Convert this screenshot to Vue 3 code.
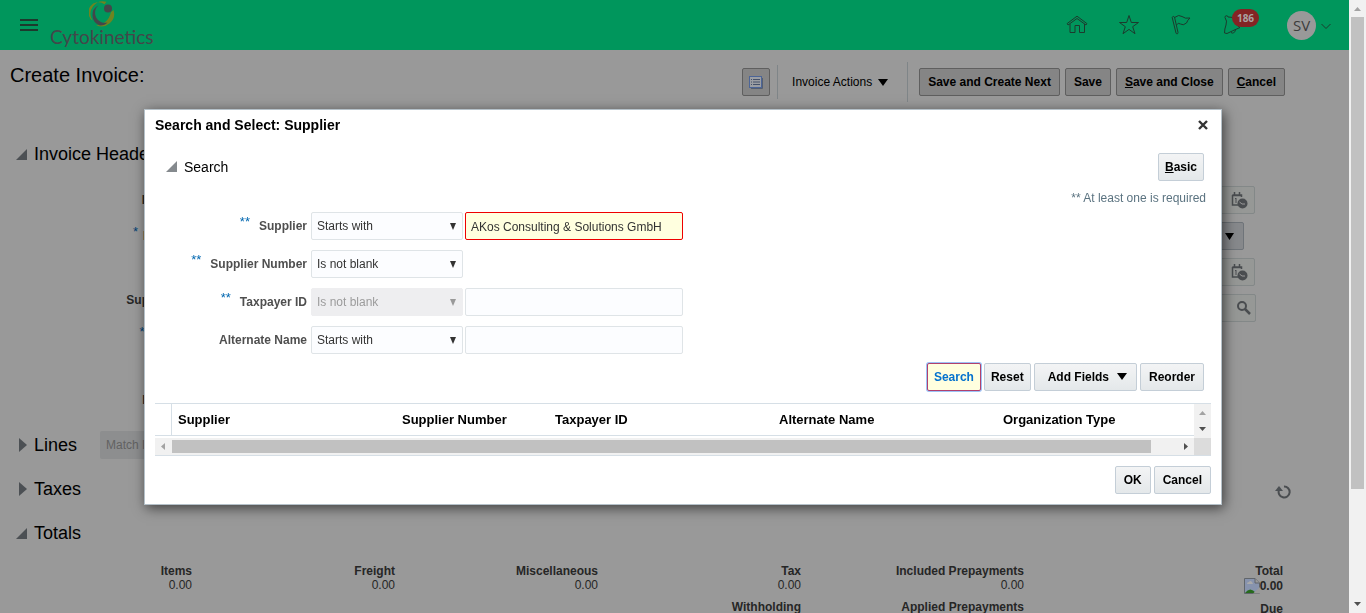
<script setup>
import { ref } from 'vue'

const invoiceLabels = [
  { text: 'Identifying PO', size: 'tall' },
  { text: 'Business Unit', size: 'tall', required: true },
  { text: 'Supplier Number', size: 'tall spaced' },
  { text: 'Supplier Site', size: 'mid', required: true },
  { text: 'Invoice Group', size: 'mid last' },
]

const totals = [
  { label: 'Items', value: '0.00' },
  { label: 'Freight', value: '0.00' },
  { label: 'Miscellaneous', value: '0.00' },
  { label: 'Tax', value: '0.00', next: 'Withholding' },
  { label: 'Included Prepayments', value: '0.00', next: 'Applied Prepayments' },
  { label: 'Total', value: '0.00', next: 'Due', grand: true },
]

const criteria = ref([
  { id: 'supplier', label: 'Supplier', required: true, operator: 'Starts with', input: true, active: true, value: 'AKos Consulting & Solutions GmbH' },
  { id: 'number', label: 'Supplier Number', required: true, operator: 'Is not blank' },
  { id: 'taxpayer', label: 'Taxpayer ID', required: true, operator: 'Is not blank', input: true, disabled: true, value: '' },
  { id: 'alternate', label: 'Alternate Name', operator: 'Starts with', input: true, value: '' },
])

const columns = ['Supplier', 'Supplier Number', 'Taxpayer ID', 'Alternate Name', 'Organization Type']
</script>

<template>
  <div class="window">
    <div class="page">
      <header class="banner">
        <button class="icon-btn menu" type="button" aria-label="Navigator">
          <svg width="18" height="12" viewBox="0 0 18 12"><path d="M0 1h18M0 6h18M0 11h18" stroke="#1d3a2d" stroke-width="2" /></svg>
        </button>
        <a class="brand" href="#">
          <svg width="26" height="26" viewBox="0 0 26 26">
            <path d="M3.500 19.500A12.500 12.500 0 0 1 17.500 .8L15.500 3.200A10 10 0 0 0 3.500 19.500Z" fill="#6f8420" />
            <path d="M24.500 9A12.500 12.500 0 0 1 7 24Q19 23.500 22 11Z" fill="#6f8420" />
            <path d="M9.500 4.200A11 11 0 0 0 11 24.500Q16 24.500 18.500 21.500A10 10 0 0 1 9.500 4.200Z" fill="#43474a" />
            <circle cx="19" cy="7.500" r="4" fill="#43474a" />
          </svg>
          <span>Cytokinetics</span>
        </a>
        <nav class="tools">
          <button class="icon-btn" type="button" aria-label="Home">
            <svg width="22" height="22" viewBox="0 0 22 22" class="line"><path d="M2 11 1.200 9.500 11 2.200 20.800 9.500 20 11 11 4.500Z M4 10V18.500H9V11.500H13.500V18.500H18.500V10" /></svg>
          </button>
          <button class="icon-btn" type="button" aria-label="Favorites">
            <svg width="22" height="22" viewBox="0 0 22 22" class="line"><path d="M11 1.500 13.300 8.500H20.500L14.700 12.700 17 19.700 11 15.400 5 19.700 7.300 12.700 1.500 8.500H8.700Z" /></svg>
          </button>
          <button class="icon-btn" type="button" aria-label="Watchlist">
            <svg width="22" height="22" viewBox="0 0 22 22" class="line"><path d="M2.200 3.500A1.300 1.300 0 0 1 4.500 3L8 18.500A1 1 0 0 1 6 19Z M4.500 3.500Q9 0 12 2.500T20 4Q17.500 6 16.500 9Q13 12 10.500 10T6.500 11" /></svg>
          </button>
          <button class="icon-btn bell" type="button" aria-label="Notifications">
            <svg width="22" height="22" viewBox="0 0 22 22" class="line"><path d="M3 3.500A1.500 1.500 0 1 1 6 3M3 3.500Q5.500 7 4 11T2.500 19L5 19.500Q10 17 18 13.500Q13 11 13 7T6 3M9 18.500Q12 20.500 13.500 16" /></svg>
            <span class="badge">186</span>
          </button>
          <button class="icon-btn user" type="button">
            <span class="avatar">SV</span>
            <svg width="10" height="10" viewBox="0 0 10 10"><path d="M.5 4 5 8.500 9.500 4" fill="none" stroke="#1d3a2d" /></svg>
          </button>
        </nav>
      </header>

      <main class="invoice">
        <div class="title-row">
          <h1>Create Invoice:</h1>
          <div class="actions">
            <button class="dim-btn square" type="button" aria-label="Change view">
              <svg width="14" height="13" viewBox="0 0 14 13"><path d="M2 12.500H13.500V2" fill="none" stroke="#555f70" /><rect x=".5" y=".5" width="12" height="11" fill="#9b9ea3" stroke="#4c6597" /><path d="M2 3.500h1M4 3.500h7M2 6h1M4 6h7M2 8.500h1M4 8.500h7" stroke="#46526a" /></svg>
            </button>
            <i class="rule small"></i>
            <button class="menu-btn" type="button">Invoice Actions <svg width="10" height="7" viewBox="0 0 10 7"><path d="M0 0h10L5 7Z" /></svg></button>
            <i class="rule"></i>
            <button class="dim-btn" type="button">Save and Create Next</button>
            <button class="dim-btn" type="button">Save</button>
            <button class="dim-btn" type="button"><u>S</u>ave and Close</button>
            <button class="dim-btn" type="button"><u>C</u>ancel</button>
          </div>
        </div>

        <section>
          <h2><svg width="11" height="11" viewBox="0 0 11 11"><path d="M11 0V11H0Z" /></svg>Invoice Header</h2>
          <div class="header-form">
            <div class="labels">
              <div v-for="l in invoiceLabels" :key="l.text" :class="l.size"><sup v-if="l.required">*</sup>{{ l.text }}</div>
            </div>
            <div class="fields">
              <button v-for="(kind, n) in ['date', 'drop', 'date', 'find']" :key="n" type="button" :class="['field', kind]" :aria-label="kind">
                <svg v-if="kind === 'date'" width="17" height="17" viewBox="0 0 17 17"><path d="M1.500 3V13H7M1.500 3H10.500V5M3.500 0V4M8.500 0V4M1 3.500H11" fill="none" stroke="#4a4d50" stroke-width="1.500" /><path d="M4 7 5 6V11" fill="none" stroke="#4a4d50" /><circle cx="11.500" cy="11.500" r="5" fill="#4a4d50" /><path d="M8.500 10 11 12H14" fill="none" stroke="#999" /></svg>
                <svg v-else-if="kind === 'drop'" width="9" height="7" viewBox="0 0 9 7"><path d="M0 0H9L4.500 7Z" fill="#000" /></svg>
                <svg v-else width="14" height="14" viewBox="0 0 14 14"><circle cx="5" cy="5" r="4" fill="none" stroke="#4a4d50" stroke-width="2" /><path d="M8 8 13 13" stroke="#4a4d50" stroke-width="2.500" /></svg>
              </button>
            </div>
          </div>
        </section>

        <h2><svg width="11" height="14" viewBox="0 0 11 14"><path d="M3 0 11 7 3 14Z" /></svg>Lines<button class="match" type="button" disabled>Match Invoice Lines</button></h2>
        <h2><svg width="11" height="14" viewBox="0 0 11 14"><path d="M3 0 11 7 3 14Z" /></svg>Taxes
          <button class="icon-btn refresh" type="button" aria-label="Refresh"><svg width="16" height="14" viewBox="0 0 16 14"><path d="M9 1.500A5.500 5.500 0 1 1 4 5" fill="none" stroke="#4a4d50" stroke-width="2" /><path d="M0 6H8L4 1Z" fill="#4a4d50" /></svg></button>
        </h2>
        <h2><svg width="11" height="11" viewBox="0 0 11 11"><path d="M11 0V11H0Z" /></svg>Totals</h2>
        <dl class="totals">
          <div v-for="t in totals" :key="t.label" :class="{ grand: t.grand }">
            <dt>{{ t.label }}</dt>
            <dd>
              <svg v-if="t.grand" width="16" height="16" viewBox="0 0 16 16"><path d="M.5.500H11L15.500 5V15.500H.5Z" fill="#8793ad" stroke="#60656b" /><path d="M11 .5V5H15.500" fill="#999" stroke="#60656b" /><path d="M3 6Q3 4 5 4 6 2 8 4L9 6Z" fill="#aaa" /><path d="M1 15Q6 8 12 15Z" fill="#276a1d" /><path d="M16 9 9 15.500H16Z" fill="#999" /></svg>{{ t.value }}
            </dd>
            <dt v-if="t.next" class="next">{{ t.next }}</dt>
          </div>
        </dl>
      </main>
    </div>

    <div class="vbar" aria-hidden="true">
      <svg width="17" height="17" viewBox="0 0 17 17"><path d="M5 11H12L8.500 7Z" fill="#a3a3a3" /></svg>
      <i></i>
      <svg width="17" height="17" viewBox="0 0 17 17"><path d="M5 6H12L8.500 10Z" fill="#505050" /></svg>
    </div>

    <div class="overlay">
      <section class="dialog" role="dialog" aria-labelledby="dlg-title">
        <div class="dialog-title">
          <h3 id="dlg-title">Search and Select: Supplier</h3>
          <button class="icon-btn" type="button" aria-label="Close"><svg width="10" height="10" viewBox="0 0 10 10"><path d="M1 1 9 9M9 1 1 9" stroke="#333" stroke-width="2.400" /></svg></button>
        </div>
        <div class="search-head">
          <h4><svg width="11" height="11" viewBox="0 0 11 11"><path d="M11 0V11H0Z" fill="#858a8e" /></svg>Search</h4>
          <button class="btn tight" type="button"><u>B</u>asic</button>
        </div>
        <p class="hint">** At least one is required</p>
        <form class="criteria" @submit.prevent>
          <div v-for="c in criteria" :key="c.id" class="criterion">
            <label :for="c.id"><sup v-if="c.required">**</sup>{{ c.label }}</label>
            <span class="pick">
              <select :id="c.id" v-model="c.operator" :disabled="c.disabled"><option>Starts with</option><option>Is not blank</option></select>
              <svg width="6" height="7" viewBox="0 0 6 7" :class="{ off: c.disabled }"><path d="M0 0H6L3 7Z" /></svg>
            </span>
            <input v-if="c.input" v-model="c.value" type="text" :class="{ active: c.active }" :aria-label="c.label + ' value'" />
          </div>
        </form>
        <div class="buttons">
          <button class="btn tight primary" type="button">Search</button>
          <button class="btn tight" type="button">Reset</button>
          <button class="btn add" type="button">Add Fields <svg width="10" height="7" viewBox="0 0 10 7"><path d="M0 0H10L5 7Z" /></svg></button>
          <button class="btn" type="button">Reorder</button>
        </div>
        <div class="results">
          <div class="results-top">
            <table>
              <colgroup><col class="c-mark" /><col class="c-wide" /><col class="c-mid" /><col class="c-wide" /><col class="c-wide" /><col /></colgroup>
              <thead><tr><td></td><th v-for="c in columns" :key="c" scope="col">{{ c }}</th></tr></thead>
            </table>
            <svg width="17" height="34" viewBox="0 0 17 34"><path d="M5 11H12L8.500 7Z" fill="#a3a3a3" /><path d="M5 23H12L8.500 27Z" fill="#505050" /></svg>
          </div>
          <div class="hbar" aria-hidden="true">
            <svg width="17" height="17" viewBox="0 0 17 17"><path d="M10 5V12L6 8.500Z" fill="#a3a3a3" /></svg>
            <i></i>
            <svg width="17" height="17" viewBox="0 0 17 17"><path d="M7 5V12L11 8.500Z" fill="#505050" /></svg>
            <b></b>
          </div>
        </div>
        <div class="buttons foot">
          <button class="btn" type="button">OK</button>
          <button class="btn" type="button">Cancel</button>
        </div>
      </section>
    </div>
  </div>
</template>

<style>
body { margin: 0; }
</style>

<style scoped>
* { box-sizing: border-box; }
.window { display: flex; height: 100vh; overflow: hidden; background: #999; color: #000; font: 12px/14px "Liberation Sans", Arial, sans-serif; }
button, input, select { font: inherit; color: inherit; margin: 0; }
h1, h2, h3, h4, p, dl, dd { margin: 0; font-weight: 400; }
svg { display: block; flex: none; }
.icon-btn { display: flex; align-items: center; padding: 0; border: 0; background: none; }
.page { flex: 1; min-width: 0; height: 100%; overflow: hidden; }

.banner { display: flex; align-items: center; height: 50px; padding: 0 18px 0 20px; background: #00965c; }
.brand { display: flex; flex-direction: column; align-items: center; margin-left: 12px; padding-bottom: 2px; color: #43474a; text-decoration: none; font: 400 19px/20px Lato, sans-serif; -webkit-text-stroke: 0; }
.tools { display: flex; align-items: center; gap: 30px; margin-left: auto; }
.line { fill: none; stroke: #1d3a2d; stroke-width: 1; stroke-linejoin: round; }
.bell { position: relative; }
.badge { position: absolute; left: 10px; top: -5px; width: 27px; height: 18px; border-radius: 9px; background: #842424; color: #a9a3a3; font: 700 10px/18px "Open Sans", sans-serif; text-align: center; }
.user { gap: 5px; margin-left: 13px; }
.avatar { width: 29px; height: 29px; border-radius: 50%; background: #999; color: #3c3c3c; font: 15px/29px "Open Sans", sans-serif; text-align: center; }

.title-row { display: flex; justify-content: space-between; height: 82px; padding: 12px 64px 0 10px; }
h1 { font-size: 20px; line-height: 26px; }
.actions { display: flex; align-items: center; gap: 5px; height: 40px; }
.dim-btn { height: 28px; padding: 0 8px; border: 1px solid #5f5f5f; border-radius: 2px; background: #858585; font-weight: 700; }
.square { width: 28px; padding: 0 6px; }
.rule { width: 1px; height: 40px; margin: 0 6px 0 14px; background: #7f8588; }
.rule.small { height: 34px; margin: 0 9px 0 2px; }
.menu-btn { display: flex; align-items: center; gap: 6px; padding: 0; border: 0; background: none; }
h2 { display: flex; align-items: center; gap: 7px; height: 44px; padding: 0 58px 0 16px; font-size: 18px; line-height: 22px; }
h2 path { fill: #4c5054; }
.header-form { display: flex; justify-content: space-between; height: 247px; padding: 6px 94px 0 0; }
.labels { width: 223px; color: #262626; font-weight: 700; text-align: right; }
.labels div { display: flex; align-items: center; justify-content: flex-end; gap: 5px; }
.tall { height: 36px; }
.mid { height: 32px; }
.spaced { margin-top: 28px; }
.last { margin-top: 34px; }
sup { color: #003f73; font-size: 13px; line-height: 13px; font-weight: 400; align-self: flex-start; }
.labels sup { margin-top: 7px; }
.fields { display: flex; flex-direction: column; gap: 8px; width: 120px; padding-top: 4px; }
.field { display: flex; align-items: center; justify-content: flex-end; height: 28px; padding: 0 6px; border: 1px solid #838888; border-radius: 2px; background: #969896; }
.drop { margin-right: 11px; padding-right: 9px; background: #87898c; border-color: #6f7479; }
.find { margin-right: -1px; padding-right: 4px; }
.match { width: 130px; height: 28px; margin-left: 16px; padding: 0 6px; border: 0; border-radius: 2px; background: #8d8e8f; color: #626262; font-size: 12px; text-align: left; white-space: nowrap; overflow: hidden; }
.refresh { margin-left: auto; padding-top: 6px; }
h2 .refresh path:first-child { fill: none; }
.totals { display: grid; grid-template-columns: 192fr 203fr 203fr 203fr 223fr 259fr; padding: 9px 66px 0 0; color: #262626; text-align: right; }
.totals dt { font-weight: 700; }
.totals .next { margin-top: 8px; }
.totals dd { display: flex; justify-content: flex-end; align-items: center; }
.grand dd { height: 16px; font-weight: 700; }

.vbar { display: flex; flex-direction: column; width: 17px; background: #f1f1f1; }
.vbar i { flex: 472 1 0; margin: 0 2px; background: #c1c1c1; }
.vbar svg:last-child { margin-top: calc(18vh - 3px); }

.overlay { position: fixed; inset: 0; display: flex; align-items: center; justify-content: center; }
.dialog { width: calc(100% - 288px); padding: 0 10px 10px; border: 1px solid #b5c1c9; background: #fff; box-shadow: 2px 3px 12px rgba(0, 0, 0, .6); }
.dialog-title { display: flex; justify-content: space-between; align-items: center; height: 30px; padding-right: 3px; }
h3 { font-size: 14px; font-weight: 700; line-height: 16px; }
.search-head { display: flex; justify-content: space-between; align-items: center; height: 28px; margin: 13px 7px 0 11px; }
h4 { display: flex; align-items: center; gap: 7px; font-size: 14px; line-height: 16px; }
.hint { margin: 10px 5px 7px 0; color: #5b7380; text-align: right; }
.criteria { display: flex; flex-direction: column; gap: 10px; }
.criterion { display: flex; align-items: center; gap: 2px; height: 28px; }
label { display: flex; align-items: center; justify-content: flex-end; gap: 9px; width: 152px; height: 28px; margin-right: 2px; color: #4f4f4f; font-weight: 700; }
label sup { margin-top: 3px; color: #0067b0; }
.pick { position: relative; width: 152px; }
.pick svg { position: absolute; right: 7px; top: 11px; fill: #333; pointer-events: none; }
.pick .off { fill: #999; }
select, input { display: block; height: 28px; border: 1px solid #dfe4e7; border-radius: 2px; background: #fcfdff; color: #333; padding: 0 5px; outline: 0; }
select { width: 100%; appearance: none; }
select:disabled { border-color: #eeeef0; background: #eeeef0; color: #9c9c9c; opacity: 1; }
input { width: 218px; }
.active { border-color: #e00; background: #ffffdf; padding-top: 2px; }
.buttons { display: flex; justify-content: flex-end; gap: 3px; margin: 9px 7px 12px 0; }
.btn { height: 28px; padding: 0 8px; border: 1px solid #c4ced7; border-radius: 2px; background: linear-gradient(#f3f4f5, #e4e8ea); font-weight: 700; }
.tight { padding: 0 6px; }
.primary { border-color: #b0406e; background: #ffffdf; color: #0572ce; box-shadow: 0 0 0 1px #9dc3f7; }
.add { display: flex; align-items: center; gap: 8px; padding: 0 9px 0 13px; }
.results { border: solid #d6dfe6; border-width: 1px 0; }
.results-top { display: flex; height: 34px; }
.results-top > svg { background: #f1f1f1; }
table { flex: 1; min-width: 0; height: 32px; table-layout: fixed; border-collapse: separate; border-spacing: 0; border-bottom: 1px solid #d6dfe6; }
.c-mark { width: 17px; }
.c-wide { width: 224px; }
.c-mid { width: 153px; }
td { padding: 0; border-right: 1px solid #d6dfe6; }
th { padding: 1px 6px 0; font-size: 13px; text-align: left; }
.hbar { display: flex; height: 17px; background: #f1f1f1; }
.hbar i { flex: 1; margin: 2px 26px 2px 0; background: #c1c1c1; }
.hbar b { width: 17px; background: #dcdcdc; }
.foot { margin: 10px 0 0; }
</style>
